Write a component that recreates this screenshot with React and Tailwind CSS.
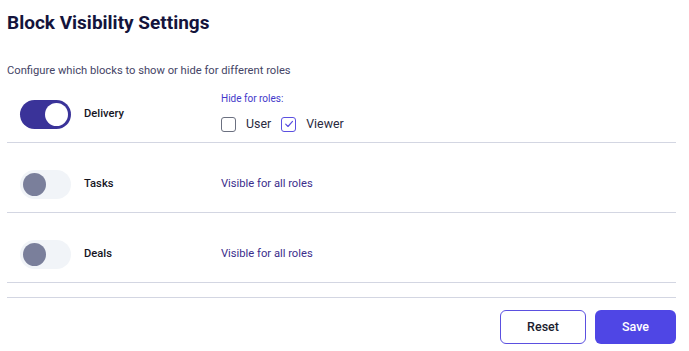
import { useState } from 'react';

const blocks = [
  { id: 'delivery', label: 'Delivery', visible: true, hidden: ['Viewer'] },
  { id: 'tasks', label: 'Tasks', visible: false, hidden: [] },
  { id: 'deals', label: 'Deals', visible: false, hidden: [] },
];

const roles = ['User', 'Viewer'];

const Toggle = ({ on, onClick }) => (
  <button
    type="button"
    onClick={onClick}
    className={`flex h-[29px] w-[51px] shrink-0 items-center rounded-full px-[3px] ${
      on ? 'justify-end bg-[#3a3399]' : 'justify-start bg-[#f1f4f8]'
    }`}
  >
    <span className={`block h-[23px] w-[23px] rounded-full ${on ? 'bg-white' : 'bg-[#7a7f9b]'}`} />
  </button>
);

const Check = ({ checked }) => (
  <span
    className={`flex h-[15px] w-[15px] items-center justify-center rounded-[3px] border-[1.5px] ${
      checked ? 'border-[#5b50e0]' : 'border-[#6b7080]'
    }`}
  >
    {checked && (
      <svg viewBox="0 0 12 12" className="h-[10px] w-[10px]" fill="none" stroke="#5b50e0" strokeWidth="1.4">
        <path d="M2 6.2 L4.8 9 L10.2 2.8" strokeLinecap="round" strokeLinejoin="round" />
      </svg>
    )}
  </span>
);

export default function App() {
  const [items, setItems] = useState(blocks);

  const flip = (id) =>
    setItems((cur) => cur.map((b) => (b.id === id ? { ...b, visible: !b.visible } : b)));

  return (
    <div className="min-h-[351px] bg-white pl-[7px] pr-[13px] font-['Roboto',sans-serif]">
      <h1 className="pt-[11px] text-[19px] font-bold leading-[24px] text-[#14143c]">Block Visibility Settings</h1>
      <p className="mt-[28px] text-[11.2px] leading-[16px] text-[#454566]">
        Configure which blocks to show or hide for different roles
      </p>

      <div>
        {items.map((b, i) => (
          <div key={b.id} className={`border-b border-[#d3d6e2] pb-[7px] ${i === 0 ? 'pt-[14px]' : 'pt-[20px]'}`}>
            <div className="flex h-[42px] items-center pl-[13px]">
              <Toggle on={b.visible} onClick={() => flip(b.id)} />
              <span className="ml-[13px] w-[137px] text-[11.2px] font-medium text-[#15151f]">{b.label}</span>
              {b.visible ? (
                <div className="-mt-[4px] flex flex-col">
                  <span className="text-[10px] leading-[14px] text-[#4338ca]">Hide for roles:</span>
                  <div className="mt-[10px] flex items-center">
                    {roles.map((r) => (
                      <label key={r} className="mr-[10px] flex items-center gap-[10px] text-[12.4px] leading-[16px] text-[#2a2a3e]">
                        <Check checked={b.hidden.includes(r)} />
                        {r}
                      </label>
                    ))}
                  </div>
                </div>
              ) : (
                <span className="text-[11.2px] text-[#3b2d8c]">Visible for all roles</span>
              )}
            </div>
          </div>
        ))}
      </div>

      <div className="mt-[14px] flex justify-end gap-[9px] border-t border-[#d3d6e2] pt-[12px]">
        <button className="h-[34px] w-[86px] rounded-[6px] border border-[#5b50e0] bg-white text-[12.5px] font-medium text-[#1c1c2e]">
          Reset
        </button>
        <button className="h-[34px] w-[81px] rounded-[6px] bg-[#4f46e5] text-[12.5px] font-medium text-white">
          Save
        </button>
      </div>
    </div>
  );
}
